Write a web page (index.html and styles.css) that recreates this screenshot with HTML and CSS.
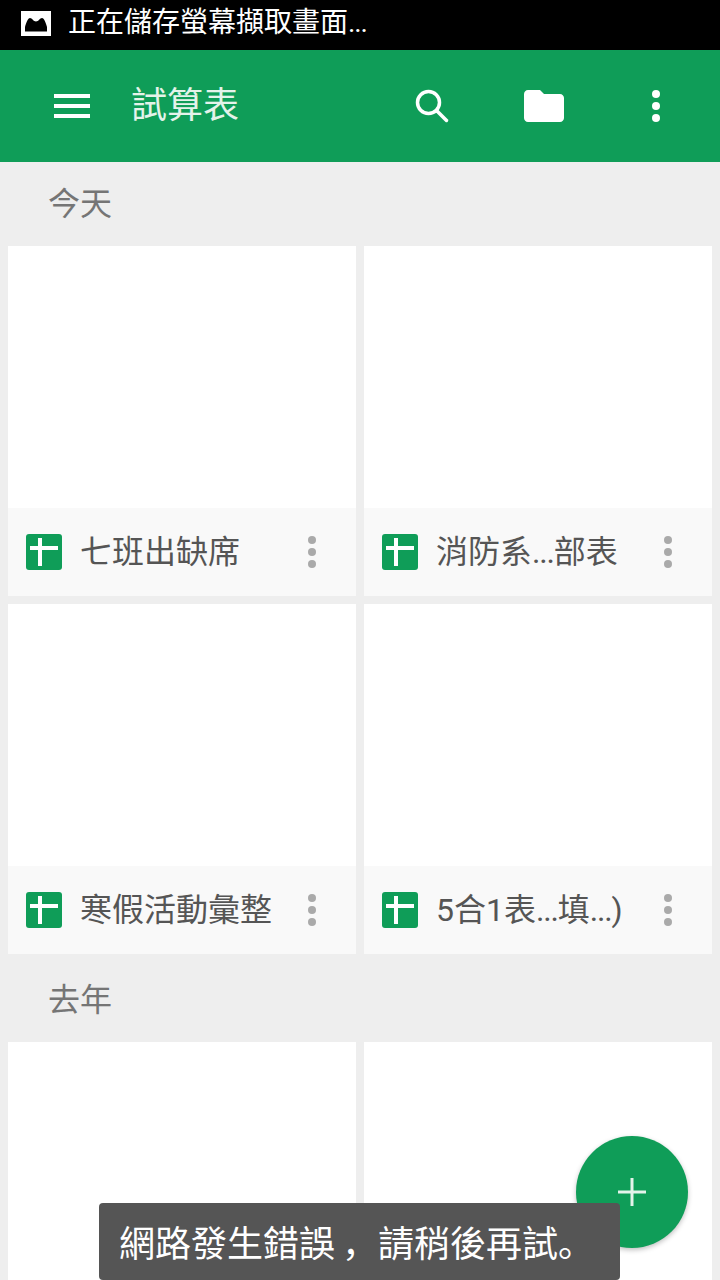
FILE: index.html
```html
<!DOCTYPE html>
<html lang="zh-Hant">
<head>
  <meta charset="UTF-8">
  <meta name="viewport" content="width=device-width, initial-scale=1.0">
  <title>試算表</title>
  <link rel="stylesheet" href="styles.css">
</head>
<body>
  <div class="screen">
    <div class="status-bar">
      <svg class="status-icon" width="30" height="25" viewBox="0 0 30 25">
        <path fill="#fff" fill-rule="evenodd" d="M0 0h30v25H0z M4 20.500V16C5 12 7 7 9 7C11 7 12.500 10.500 15 10.500C17.500 10.500 19 7 21 7C23 7 25 12 26 16V20.500z"/>
      </svg>
      <span class="status-text">正在儲存螢幕擷取畫面<span class="dots">...</span></span>
    </div>

    <header class="app-bar">
      <svg class="app-icon" viewBox="0 0 24 24"><path d="M3 18h18v-2H3v2zm0-5h18v-2H3v2zm0-7v2h18V6H3z"/></svg>
      <h1 class="app-title">試算表</h1>
      <div class="app-actions">
        <svg class="app-icon" viewBox="0 0 48 48">
          <circle class="search-ring" cx="20.500" cy="20.500" r="11"/>
          <line class="search-handle" x1="29" y1="29" x2="38.500" y2="38.500"/>
        </svg>
        <svg class="app-icon" viewBox="0 0 24 24"><path d="M10 4H4c-1.100 0-1.990.9-1.990 2L2 18c0 1.100.9 2 2 2h16c1.100 0 2-.9 2-2V8c0-1.100-.9-2-2-2h-8l-2-2z"/></svg>
        <svg class="app-icon" viewBox="0 0 24 24"><circle cx="12" cy="6" r="2"/><circle cx="12" cy="12" r="2"/><circle cx="12" cy="18" r="2"/></svg>
      </div>
    </header>

    <main class="content">
      <h2 class="section-title">今天</h2>
      <div class="grid">
        <div class="card">
          <div class="thumb"></div>
          <div class="card-footer">
            <span class="sheet-icon"></span>
            <span class="card-name">七班出缺席</span>
            <span class="card-more"><i></i><i></i><i></i></span>
          </div>
        </div>
        <div class="card">
          <div class="thumb"></div>
          <div class="card-footer">
            <span class="sheet-icon"></span>
            <span class="card-name">消防系<span class="dots">...</span>部表</span>
            <span class="card-more"><i></i><i></i><i></i></span>
          </div>
        </div>
        <div class="card">
          <div class="thumb"></div>
          <div class="card-footer">
            <span class="sheet-icon"></span>
            <span class="card-name">寒假活動彙整</span>
            <span class="card-more"><i></i><i></i><i></i></span>
          </div>
        </div>
        <div class="card">
          <div class="thumb"></div>
          <div class="card-footer">
            <span class="sheet-icon"></span>
            <span class="card-name">5合1表<span class="dots">...</span>填<span class="dots">...</span>)</span>
            <span class="card-more"><i></i><i></i><i></i></span>
          </div>
        </div>
      </div>

      <h2 class="section-title">去年</h2>
      <div class="grid">
        <div class="card"><div class="thumb"></div></div>
        <div class="card"><div class="thumb"></div></div>
      </div>
    </main>

    <button class="fab" type="button">
      <svg width="28" height="28" viewBox="0 0 28 28"><path fill="#e4f3ea" d="M12.500 0h3v12.500H28v3H15.500V28h-3V15.500H0v-3h12.500z"/></svg>
    </button>
    <div class="toast">網路發生錯誤<span class="punct comma" lang="zh-Hans">，</span>請稍後再試<span class="punct" lang="zh-Hans">。</span></div>
  </div>
</body>
</html>
```

FILE: styles.css
```css
* {
  box-sizing: border-box;
}

body {
  margin: 0;
  font-family: Roboto, "Noto Sans CJK TC", sans-serif;
  background: #eee;
}

.screen {
  position: relative;
  width: 720px;
  height: 1280px;
  overflow: hidden;
}

.status-bar {
  display: flex;
  align-items: center;
  height: 50px;
  padding-left: 21px;
  background: #000;
  color: #fff;
}

.status-icon {
  flex: none;
  margin: 0 17px 3px 0;
}

.status-text {
  font-size: 28px;
  line-height: 46px;
  margin-bottom: 4px;
}

.app-bar {
  display: flex;
  align-items: center;
  height: 112px;
  padding: 0 40px 0 48px;
  background: #0f9d58;
}

.app-icon {
  display: block;
  flex: none;
  width: 48px;
  height: 48px;
  fill: #fff;
}

.search-ring {
  fill: none;
  stroke: #fff;
  stroke-width: 3.5;
}

.search-handle {
  stroke: #fff;
  stroke-width: 3.5;
  stroke-linecap: round;
}

.app-title {
  flex: 1;
  margin: 0 0 0 35px;
  font-size: 36px;
  font-weight: 400;
  line-height: 44px;
  color: #e4f3ea;
}

.app-actions {
  display: flex;
  gap: 64px;
}

.section-title {
  height: 84px;
  margin: 0;
  padding-left: 48px;
  font-size: 32px;
  font-weight: 400;
  line-height: 84px;
  color: #757575;
}

.grid {
  display: grid;
  grid-template-columns: 348px 348px;
  gap: 8px;
  padding: 0 8px 4px;
}

.card {
  height: 350px;
  background: #fff;
}

.thumb {
  height: 262px;
  background: #fff;
}

.card-footer {
  display: flex;
  align-items: center;
  height: 88px;
  padding-left: 18px;
  background: #f9f9f9;
}

.sheet-icon {
  position: relative;
  flex: none;
  width: 36px;
  height: 36px;
  border-radius: 3px;
  background: #0f9d58;
}

/* white cross of the sheets logo */
.sheet-icon::before {
  content: "";
  position: absolute;
  left: 4px;
  top: 12px;
  width: 28px;
  height: 4px;
  background: #fff;
}

.sheet-icon::after {
  content: "";
  position: absolute;
  left: 12px;
  top: 4px;
  width: 4px;
  height: 28px;
  background: #fff;
}

.card-name {
  flex: 1;
  margin-left: 18px;
  font-size: 32px;
  line-height: 44px;
  color: #555;
  white-space: nowrap;
}

.dots {
  letter-spacing: -1.2px;
}

.card-more {
  display: flex;
  flex-direction: column;
  gap: 4px;
  flex: none;
  width: 8px;
  margin-right: 40px;
}

.card-more i {
  display: block;
  width: 8px;
  height: 8px;
  border-radius: 50%;
  background: #aaa;
}

.fab {
  position: absolute;
  left: 576px;
  top: 1136px;
  display: flex;
  align-items: center;
  justify-content: center;
  width: 112px;
  height: 112px;
  padding: 0;
  border: 0;
  border-radius: 50%;
  background: #0f9d58;
  box-shadow: 0 2px 5px rgba(0, 0, 0, 0.25);
}

.toast {
  position: absolute;
  left: 99px;
  top: 1203px;
  width: 521px;
  height: 77px;
  padding-left: 20px;
  border-radius: 4px;
  background: #555;
  color: #fff;
  font-size: 36px;
  line-height: 77px;
  white-space: nowrap;
}

/* comma and full stop sit low in the box here, not centred as in the TC font */
.punct {
  font-family: "Noto Sans CJK SC", sans-serif;
}

.comma {
  margin-left: 7px;
}
```
